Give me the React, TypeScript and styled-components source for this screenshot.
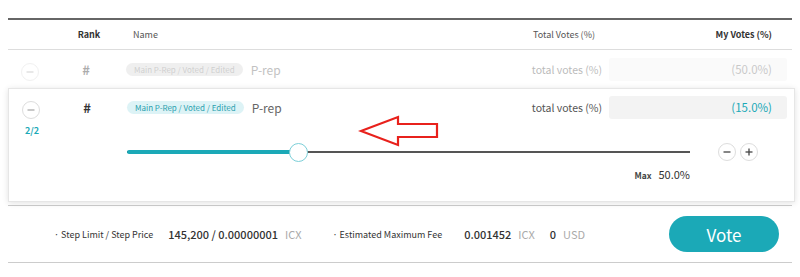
import React from 'react'
import styled, { createGlobalStyle } from 'styled-components'

const teal = '#1ba9b7'

const GlobalStyle = createGlobalStyle`
  body {
    margin: 0;
    background: #fff;
    font-family: 'Noto Sans CJK KR', 'Noto Sans', sans-serif;
    color: #333;
  }
`

const Page = styled.div`
  margin: 0 8px;
  padding-top: 18px;
`

const Table = styled.div`
  border-top: 2px solid #666;
`

const Row = styled.div<{ $height: number; $padRight?: number; $faded?: boolean }>`
  display: flex;
  align-items: center;
  height: ${(p) => p.$height}px;
  padding-right: ${(p) => p.$padRight ?? 5}px;
  opacity: ${(p) => (p.$faded ? 0.4 : 1)};
`

const HeaderRow = styled(Row)`
  border-bottom: 1px solid #ddd;
  font-size: 9px;
  color: #555;
`

const IconCell = styled.div`
  width: 58px;
  flex: none;
  padding-left: 13px;
  box-sizing: border-box;
`

const RankCell = styled.div<{ $bold?: boolean }>`
  width: 40px;
  flex: none;
  text-align: center;
  font-weight: 700;
  font-size: ${(p) => (p.$bold ? 13 : 9)}px;
  padding-left: ${(p) => (p.$bold ? 0 : 3)}px;
  color: #333;
`

const NameCell = styled.div<{ $pad?: number }>`
  flex: 1;
  display: flex;
  align-items: center;
  gap: 8px;
  margin-left: 20px;
  padding-left: ${(p) => p.$pad ?? 0}px;
`

const TotalCell = styled.div<{ $size: number; $pad: number }>`
  text-align: right;
  font-size: ${(p) => p.$size}px;
  color: #555;
  padding-right: ${(p) => p.$pad}px;
`

const MyCell = styled.div<{ $bold?: boolean }>`
  width: 178px;
  flex: none;
  text-align: right;
  padding-right: 15px;
  box-sizing: border-box;
  font-weight: ${(p) => (p.$bold ? 700 : 400)};
  font-size: 9px;
  color: #333;
`

const VoteInput = styled.div<{ $active?: boolean }>`
  width: 178px;
  height: 23px;
  flex: none;
  box-sizing: border-box;
  background: #f3f3f3;
  border-radius: 3px;
  display: flex;
  align-items: center;
  justify-content: flex-end;
  padding-right: 15px;
  font-size: 11.5px;
  color: ${(p) => (p.$active ? teal : '#777')};
`

const Badge = styled.span<{ $active?: boolean }>`
  display: inline-flex;
  align-items: center;
  height: 13px;
  padding: 0 8px;
  border-radius: 7px;
  font-size: 8px;
  background: ${(p) => (p.$active ? '#ddf3f6' : '#d9d9d9')};
  color: ${(p) => (p.$active ? '#2a9fae' : '#888')};
`

const RepName = styled.span`
  font-size: 12px;
  color: #666;
`

const RoundButton = styled.button<{ $size?: number }>`
  width: ${(p) => p.$size ?? 18}px;
  height: ${(p) => p.$size ?? 18}px;
  padding: 0;
  border: 1px solid #ddd;
  border-radius: 50%;
  background: #fff;
  display: inline-flex;
  align-items: center;
  justify-content: center;
  cursor: pointer;
`

const Card = styled.div`
  position: relative;
  margin-right: -3px;
  border: 1px solid #e6e6e6;
  background: #fff;
  box-shadow: 0 1px 6px rgba(0, 0, 0, 0.12);
`

const SliderSection = styled.div`
  display: flex;
  height: 76px;
  padding-right: 7px;
`

const Counter = styled.div`
  width: 58px;
  flex: none;
  padding: 0 0 0 16px;
  box-sizing: border-box;
  font-size: 9px;
  font-weight: 700;
  color: ${teal};
  line-height: 12px;
`

const SliderArea = styled.div`
  width: 563px;
  margin-left: 60px;
  padding-top: 22px;
`

const Track = styled.div`
  position: relative;
  height: 10px;
  display: flex;
  align-items: center;
`

const TrackLine = styled.div`
  position: absolute;
  left: 0;
  right: 0;
  height: 1.5px;
  background: #555;
`

const TrackFill = styled.div`
  position: absolute;
  left: 0;
  height: 4px;
  border-radius: 2px;
  background: ${teal};
`

const Knob = styled.div`
  position: absolute;
  width: 19px;
  height: 19px;
  margin-left: -7px;
  box-sizing: border-box;
  border: 1px solid #7ccfd8;
  border-radius: 50%;
  background: #fff;
`

const MaxRow = styled.div`
  display: flex;
  justify-content: flex-end;
  align-items: baseline;
  gap: 7px;
  margin-top: 9px;
  font-size: 11px;
  color: #333;

  small {
    font-size: 8.5px;
    font-weight: 700;
    color: #444;
  }
`

const Steppers = styled.div`
  display: flex;
  gap: 4px;
  margin-left: 28px;
  padding-top: 18px;
`

const Annotation = styled.svg`
  position: absolute;
  left: 349px;
  top: 25px;
`

const Footer = styled.div`
  margin-top: 3px;
  border-top: 1px solid #ccc;
  border-bottom: 1px solid #ccc;
  height: 56px;
  display: flex;
  align-items: center;
  padding: 0 13px 0 46px;
`

const FeeLabel = styled.span<{ $gap: number }>`
  font-size: 9px;
  color: #333;
  margin-right: ${(p) => p.$gap}px;
`

const FeeValue = styled.span`
  font-size: 11px;
  font-weight: 500;
  color: #333;
`

const Unit = styled.span<{ $gap: number }>`
  font-size: 11px;
  color: #aaa;
  margin-left: 7px;
  margin-right: ${(p) => p.$gap}px;
`

const VoteButton = styled.button`
  margin-left: auto;
  width: 110px;
  height: 36px;
  border: none;
  border-radius: 18px;
  background: ${teal};
  color: #fff;
  font-family: inherit;
  font-size: 17px;
  cursor: pointer;
`

function Minus({ color = '#999' }: { color?: string }) {
  return (
    <svg width="8" height="8" viewBox="0 0 8 8">
      <line x1="0.5" y1="4" x2="7.5" y2="4" stroke={color} strokeWidth="1.3" />
    </svg>
  )
}

function Plus() {
  return (
    <svg width="8" height="8" viewBox="0 0 8 8">
      <line x1="0.5" y1="4" x2="7.5" y2="4" stroke="#444" strokeWidth="1.3" />
      <line x1="4" y1="0.5" x2="4" y2="7.5" stroke="#444" strokeWidth="1.3" />
    </svg>
  )
}

function RepRow({ faded, value, padRight }: { faded?: boolean; value: string; padRight?: number }) {
  return (
    <Row $height={faded ? 38 : 36} $faded={faded} $padRight={padRight}>
      <IconCell>
        <RoundButton>
          <Minus color="#aaa" />
        </RoundButton>
      </IconCell>
      <RankCell $bold>#</RankCell>
      <NameCell>
        <Badge $active={!faded}>Main P-Rep / Voted / Edited</Badge>
        <RepName>P-rep</RepName>
      </NameCell>
      <TotalCell $size={10.5} $pad={7}>
        total votes (%)
      </TotalCell>
      <VoteInput $active={!faded}>{value}</VoteInput>
    </Row>
  )
}

export default function App() {
  const percent = 15
  const max = 50
  const pos = (percent / max) * 100

  return (
    <Page>
      <GlobalStyle />
      <Table>
        <HeaderRow $height={29}>
          <IconCell />
          <RankCell>Rank</RankCell>
          <NameCell $pad={4}>Name</NameCell>
          <TotalCell $size={9} $pad={14}>
            Total Votes (%)
          </TotalCell>
          <MyCell $bold>My Votes (%)</MyCell>
        </HeaderRow>

        <RepRow faded value="(50.0%)" />

        <Card>
          <RepRow value="(15.0%)" padRight={7} />
          <SliderSection>
            <Counter>2/2</Counter>
            <SliderArea>
              <Track>
                <TrackLine />
                <TrackFill style={{ width: `${pos}%` }} />
                <Knob style={{ left: `${pos}%` }} />
              </Track>
              <MaxRow>
                <small>Max</small>
                <span>50.0%</span>
              </MaxRow>
            </SliderArea>
            <Steppers>
              <RoundButton>
                <Minus color="#444" />
              </RoundButton>
              <RoundButton>
                <Plus />
              </RoundButton>
            </Steppers>
          </SliderSection>
          <Annotation width="84" height="34" viewBox="0 0 84 34">
            <polygon
              points="3,17 40,3 40,10 79,10 79,23 40,23 40,31"
              fill="none"
              stroke="#e8211c"
              strokeWidth="2.2"
              strokeLinejoin="miter"
            />
          </Annotation>
        </Card>

        <Footer>
          <FeeLabel $gap={15}>· Step Limit / Step Price</FeeLabel>
          <FeeValue>145,200 / 0.00000001</FeeValue>
          <Unit $gap={31}>ICX</Unit>
          <FeeLabel $gap={22}>· Estimated Maximum Fee</FeeLabel>
          <FeeValue>0.001452</FeeValue>
          <Unit $gap={15}>ICX</Unit>
          <FeeValue>0</FeeValue>
          <Unit $gap={0}>USD</Unit>
          <VoteButton>Vote</VoteButton>
        </Footer>
      </Table>
    </Page>
  )
}
